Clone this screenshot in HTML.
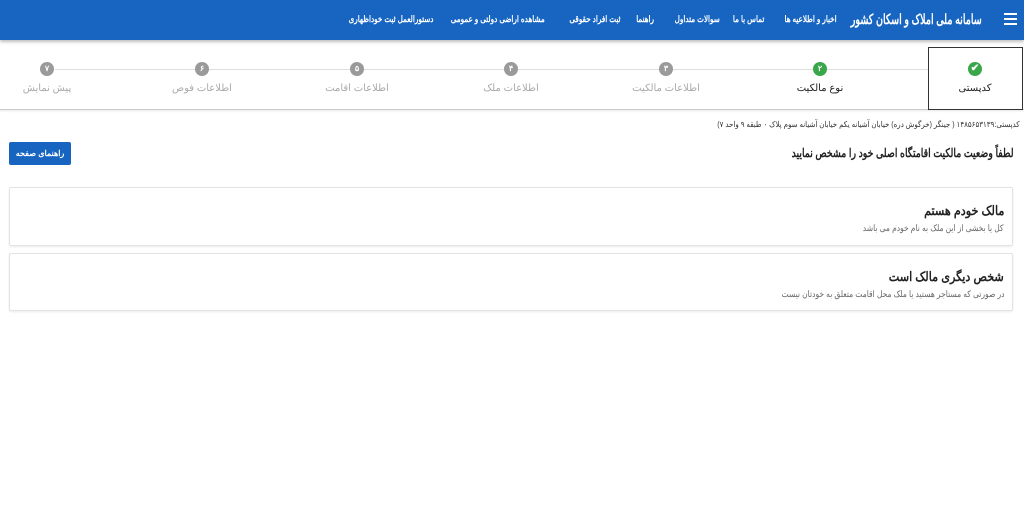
<!DOCTYPE html>
<html lang="fa" dir="rtl"><head><meta charset="utf-8">
<style>
*{box-sizing:border-box;margin:0;padding:0}
body{width:1024px;height:528px;background:#fff;font-family:"Liberation Sans","Noto Sans CJK SC",sans-serif;position:relative;overflow:hidden;color:#222}
.hdr{position:absolute;left:0;top:0;width:1024px;height:40px;background:#1765c1;box-shadow:0 2px 3px rgba(0,0,0,.25);color:#fff}
.hdr .t{position:absolute;left:852px;width:128px;top:11px;font-size:14px;font-weight:bold;white-space:nowrap;text-align:center;display:flex;justify-content:center}
.hdr .t span{display:inline-block;transform:scaleX(.68)}
.burger{position:absolute;right:7px;top:13px;width:13px}
.burger i{display:block;height:2px;background:#fff;margin-bottom:3px}
.nav{position:absolute;top:14px;font-size:9px;font-weight:bold;white-space:nowrap;display:flex;justify-content:center}
.nav span{display:inline-block;transform:scaleX(.8)}
.step{position:absolute;top:62px;width:140px;margin-left:-70px;text-align:center}
.c{width:14px;height:14px;border-radius:50%;background:#9a9a9a;color:#fff;font-size:8px;line-height:14px;margin:0 auto;font-weight:bold}
.lbl{font-size:10px;color:#aaa;margin-top:7px}
.line{position:absolute;top:69px;height:1px;background:#ddd}
.card{position:absolute;left:9px;width:1004px;border:1px solid #e3e3e3;border-radius:2px;box-shadow:0 1px 2px rgba(0,0,0,.08)}
.sx{position:absolute;right:8px;white-space:nowrap;transform-origin:right center}
.card b{top:15px;font-size:13px;transform:scaleX(.86)}
.card span{top:35px;font-size:9px;color:#666;transform:scaleX(.84)}
</style></head><body>
<div class="hdr">
<div class="burger"><i></i><i></i><i></i></div>
<div class="t"><span>سامانه ملی املاک و اسکان کشور</span></div>
<div class="nav" style="left:780px;width:62px"><span>اخبار و اطلاعیه ها</span></div>
<div class="nav" style="left:730px;width:37px"><span>تماس با ما</span></div>
<div class="nav" style="left:676px;width:42px"><span>سوالات متداول</span></div>
<div class="nav" style="left:636px;width:19px"><span>راهنما</span></div>
<div class="nav" style="left:569px;width:51px"><span>ثبت افراد حقوقی</span></div>
<div class="nav" style="left:458px;width:80px"><span>مشاهده اراضی دولتی و عمومی</span></div>
<div class="nav" style="left:355px;width:72px"><span>دستورالعمل ثبت خوداظهاری</span></div>
</div>
<div style="position:absolute;left:0;top:46px;width:1024px;height:64px;border-bottom:1px solid #ccc;box-shadow:0 1px 2px rgba(0,0,0,.1)"></div>
<div class="line" style="left:55px;width:910px"></div>
<div style="position:absolute;left:928px;top:47px;width:95px;height:63px;border:1.5px solid #333;background:#fff"></div>
<div class="step" style="left:975px"><div class="c" style="background:#3aa64a;font-size:10px">✔</div><div class="lbl" style="color:#222">کدپستی</div></div>
<div class="step" style="left:820px"><div class="c" style="background:#3aa64a">۲</div><div class="lbl" style="color:#222">نوع مالکیت</div></div>
<div class="step" style="left:666px"><div class="c">۳</div><div class="lbl">اطلاعات مالکیت</div></div>
<div class="step" style="left:511px"><div class="c">۴</div><div class="lbl">اطلاعات ملک</div></div>
<div class="step" style="left:357px"><div class="c">۵</div><div class="lbl">اطلاعات اقامت</div></div>
<div class="step" style="left:202px"><div class="c">۶</div><div class="lbl">اطلاعات فوص</div></div>
<div class="step" style="left:47px"><div class="c">۷</div><div class="lbl">پیش نمایش</div></div>
<div class="sx" style="right:4px;top:120px;font-size:8px;color:#333;transform:scaleX(.88)">کدپستی:۱۴۸۵۶۵۳۱۳۹ ( جینگر (خرگوش دره) خیابان آشیانه یکم خیابان آشیانه سوم پلاک ۰ طبقه ۹ واحد ۷)</div>
<div style="position:absolute;left:9px;top:142px;width:62px;height:23px;background:#1765c1;border-radius:2px;color:#fff;font-size:8px;font-weight:bold;text-align:center;line-height:23px">راهنمای صفحه</div>
<div class="sx" style="right:10px;top:146px;font-size:12px;font-weight:bold;transform:scaleX(.78)">لطفاً وضعیت مالکیت اقامتگاه اصلی خود را مشخص نمایید</div>
<div class="card" style="top:187px;height:59px"><b class="sx">مالک خودم هستم</b><span class="sx">کل یا بخشی از این ملک به نام خودم می باشد</span></div>
<div class="card" style="top:253px;height:58px"><b class="sx">شخص دیگری مالک است</b><span class="sx">در صورتی که مستاجر هستید یا ملک محل اقامت متعلق به خودتان نیست</span></div>
</body></html>
